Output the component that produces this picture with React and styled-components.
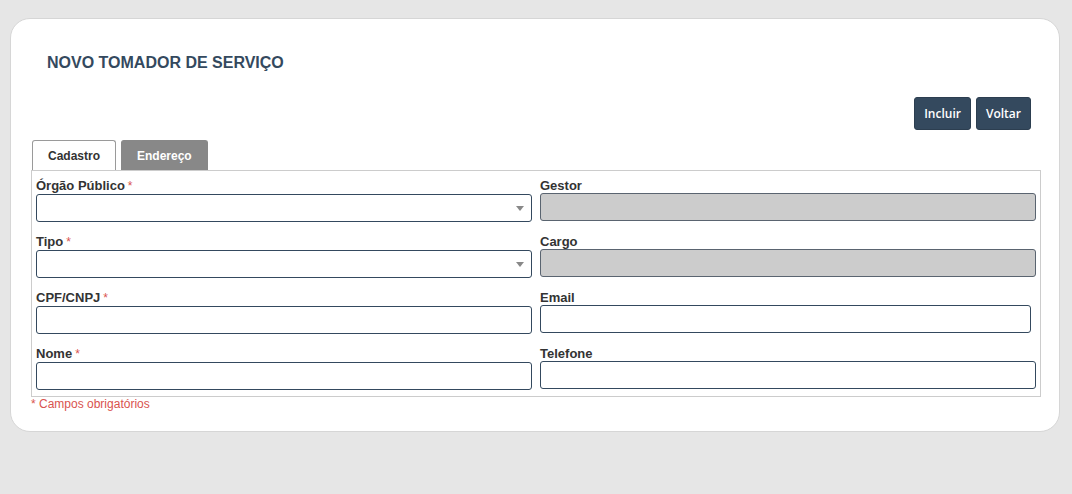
import React from "react";
import styled, { createGlobalStyle } from "styled-components";

const Global = createGlobalStyle`
  * { box-sizing: border-box; }
  html, body { margin: 0; padding: 0; background: #e6e6e6; }
  body { font-family: "Liberation Sans", Arial, sans-serif; }
`;

const Page = styled.div`
  padding: 18px 12px 0 10px;
  min-height: 494px;
`;

const Card = styled.div`
  background: #fff;
  border: 1px solid #d6d6d6;
  border-radius: 20px;
  padding: 35px 18px 20px 20px;
`;

const Title = styled.h1`
  margin: 0 0 25px 16px;
  font-size: 16px;
  line-height: 18px;
  font-weight: bold;
  color: #34495e;
`;

const Actions = styled.div`
  display: flex;
  justify-content: flex-end;
  gap: 5px;
  padding-right: 10px;
  margin-bottom: 10px;
`;

const Button = styled.button`
  height: 33px;
  padding: 0 9px;
  background: #34495e;
  color: #fff;
  border: 1px solid #2c3e50;
  border-radius: 3px;
  font-family: "Open Sans", sans-serif;
  font-size: 12px;
  font-weight: 600;
  cursor: pointer;
`;

const Tabs = styled.div`
  display: flex;
  gap: 5px;
  padding-left: 1px;
`;

const Tab = styled.div`
  height: 30px;
  display: flex;
  align-items: center;
  padding: 0 15px;
  font-size: 12px;
  font-weight: bold;
  border-radius: 3px 3px 0 0;
  border: 1px solid ${(p) => (p.$active ? "#9a9a9a" : "#888")};
  border-bottom: none;
  background: ${(p) => (p.$active ? "#fff" : "#888")};
  color: ${(p) => (p.$active ? "#333" : "#fff")};
`;

const Panel = styled.div`
  border: 1px solid #ccc;
  padding: 8px 4px 6px 4px;
  display: grid;
  grid-template-columns: 1fr 1fr;
  column-gap: 8px;
  row-gap: 13px;
`;

const Field = styled.div`
  display: flex;
  flex-direction: column;
`;

const Label = styled.label`
  font-size: 13px;
  line-height: 15px;
  font-weight: bold;
  color: #333;
  margin-top: -1px;
`;

const Req = styled.span`
  color: #d9534f;
  font-weight: normal;
  font-size: 12px;
  margin-left: 3px;
`;

const Input = styled.input`
  height: 28px;
  width: ${(p) => (p.$narrow ? "calc(100% - 5px)" : "100%")};
  border: 1px solid ${(p) => (p.disabled ? "#5a6470" : "#34495e")};
  border-radius: 3px;
  background: ${(p) => (p.disabled ? "#cccccc" : "#fff")};
  padding: 0 6px;
  font-size: 13px;
  font-family: inherit;
  outline: none;
`;

const SelectBox = styled.div`
  position: relative;
  height: 28px;
  border: 1px solid #34495e;
  border-radius: 3px;
  background: #fff;
`;

const Arrow = styled.span`
  position: absolute;
  right: 7px;
  top: 11px;
  width: 0;
  height: 0;
  border-left: 4px solid transparent;
  border-right: 4px solid transparent;
  border-top: 5px solid #888;
`;

const Note = styled.div`
  margin-top: 0;
  font-size: 12px;
  line-height: 14px;
  color: #d9534f;
`;

const Select = () => (
  <SelectBox>
    <Arrow />
  </SelectBox>
);

export default function App() {
  return (
    <>
      <Global />
      <Page>
        <Card>
          <Title>NOVO TOMADOR DE SERVIÇO</Title>
          <Actions>
            <Button>Incluir</Button>
            <Button>Voltar</Button>
          </Actions>
          <Tabs>
            <Tab $active>Cadastro</Tab>
            <Tab>Endereço</Tab>
          </Tabs>
          <Panel>
            <Field>
              <Label>Órgão Público<Req>*</Req></Label>
              <Select />
            </Field>
            <Field>
              <Label>Gestor</Label>
              <Input disabled />
            </Field>
            <Field>
              <Label>Tipo<Req>*</Req></Label>
              <Select />
            </Field>
            <Field>
              <Label>Cargo</Label>
              <Input disabled />
            </Field>
            <Field>
              <Label>CPF/CNPJ<Req>*</Req></Label>
              <Input />
            </Field>
            <Field>
              <Label>Email</Label>
              <Input $narrow type="email" />
            </Field>
            <Field>
              <Label>Nome<Req>*</Req></Label>
              <Input />
            </Field>
            <Field>
              <Label>Telefone</Label>
              <Input />
            </Field>
          </Panel>
          <Note>* Campos obrigatórios</Note>
        </Card>
      </Page>
    </>
  );
}
